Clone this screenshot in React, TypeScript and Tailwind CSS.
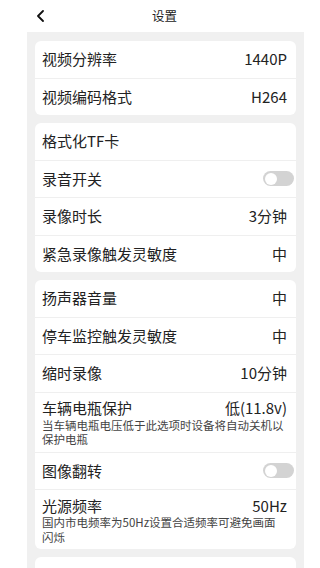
import React from "react";

type Row = {
  label: string;
  value?: string;
  toggle?: boolean;
  note?: string;
};

const GROUPS: Row[][] = [
  [
    { label: "视频分辨率", value: "1440P" },
    { label: "视频编码格式", value: "H264" },
  ],
  [
    { label: "格式化TF卡" },
    { label: "录音开关", toggle: true },
    { label: "录像时长", value: "3分钟" },
    { label: "紧急录像触发灵敏度", value: "中" },
  ],
  [
    { label: "扬声器音量", value: "中" },
    { label: "停车监控触发灵敏度", value: "中" },
    { label: "缩时录像", value: "10分钟" },
    {
      label: "车辆电瓶保护",
      value: "低(11.8v)",
      note: "当车辆电瓶电压低于此选项时设备将自动关机以保护电瓶",
    },
    { label: "图像翻转", toggle: true },
    {
      label: "光源频率",
      value: "50Hz",
      note: "国内市电频率为50Hz设置合适频率可避免画面闪烁",
    },
  ],
  [{ label: "" }],
];

function Toggle() {
  return (
    <div className="-mr-[7px] w-[31px] h-[15px] rounded-full bg-[#d3d3d3] flex items-center px-[2px]">
      <div className="w-[12px] h-[12px] rounded-full bg-white" />
    </div>
  );
}

function SettingRow({ row, last }: { row: Row; last: boolean }) {
  return (
    <div className={`pl-[7px] pr-[9px] ${last ? "" : "border-b border-[#efefef]"}`}>
      <div className={`${row.note ? "h-[32px]" : "h-[36.5px]"} flex items-center justify-between`}>
        <span className="text-[15px] text-[#222]">{row.label}</span>
        {row.toggle ? (
          <Toggle />
        ) : (
          row.value && <span className="text-[15px] text-[#222]">{row.value}</span>
        )}
      </div>
      {row.note && (
        <p className="-mt-[7px] pb-[5px] text-[11.5px] leading-[14.5px] text-[#444]">{row.note}</p>
      )}
    </div>
  );
}

export default function App() {
  return (
    <div
      className="w-[320px] h-[568px] bg-white overflow-hidden flex flex-col"
      style={{ fontFamily: '"Noto Sans CJK SC", "Noto Sans", sans-serif' }}
    >
      {/* Header */}
      <div className="h-8 shrink-0 flex items-center relative">
        <svg
          className="absolute left-[36px] top-[10px]"
          width="10"
          height="12"
          viewBox="0 0 10 12"
          fill="none"
          stroke="#111"
          strokeWidth="1.8"
          strokeLinecap="round"
          strokeLinejoin="round"
        >
          <path d="M7 1 L2 6 L7 11" />
        </svg>
        <span className="ml-[152px] text-[12.5px] text-[#222]">设置</span>
      </div>

      {/* Panel */}
      <div className="ml-[27px] mr-[16px] flex-1 bg-[#f0f0f0] px-2 pt-[9px] flex flex-col gap-2">
        {GROUPS.map((g, gi) => (
          <div key={gi} className="bg-white rounded-[6px] shrink-0">
            {g.map((r, ri) => (
              <SettingRow key={ri} row={r} last={ri === g.length - 1} />
            ))}
          </div>
        ))}
      </div>
    </div>
  );
}
